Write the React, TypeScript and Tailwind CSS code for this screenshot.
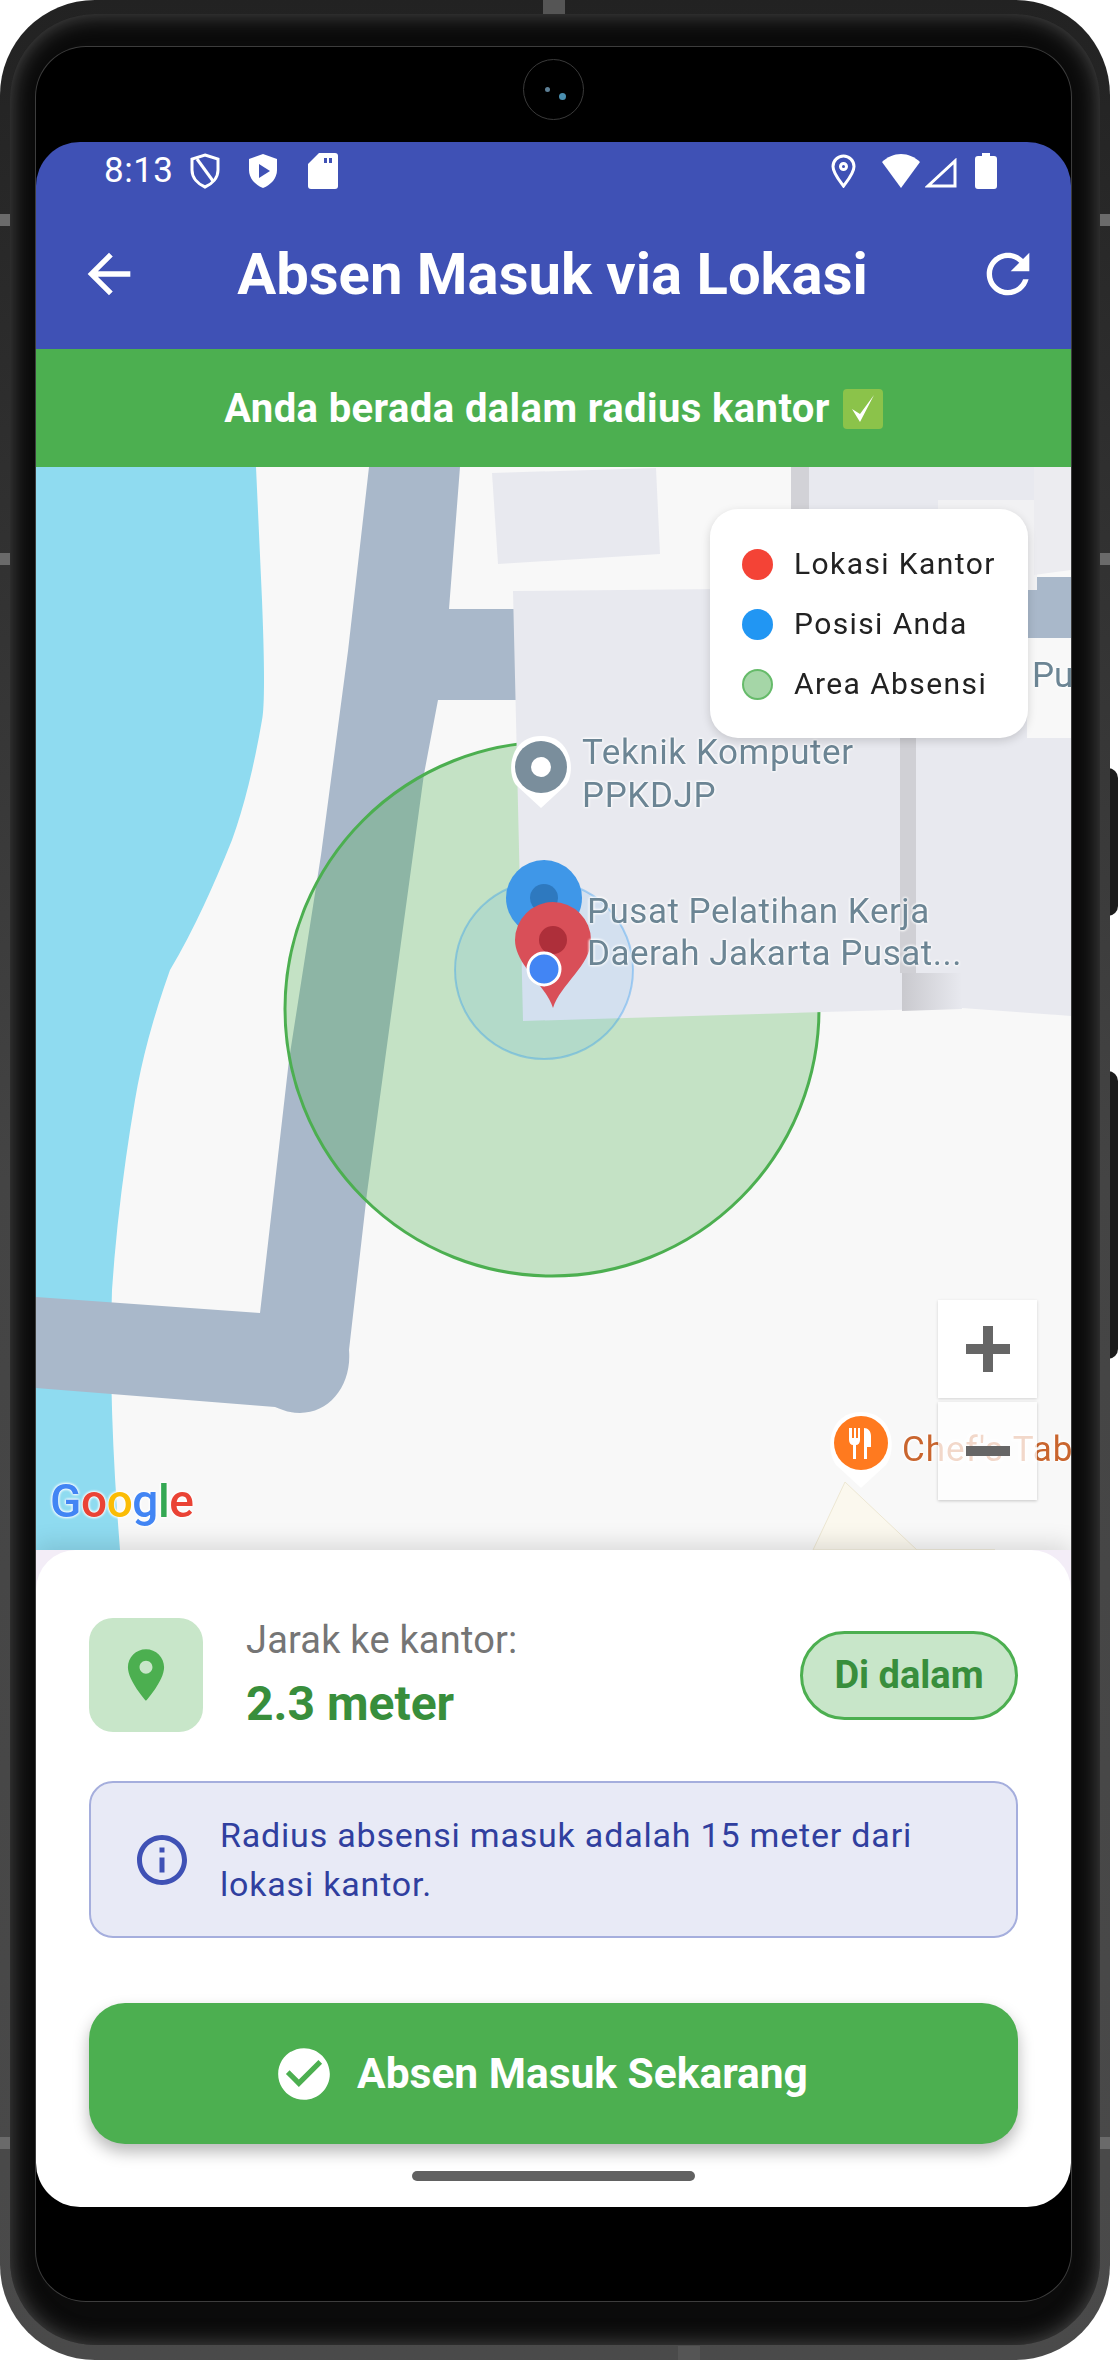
import React from 'react';

const font = { fontFamily: 'Roboto, "Noto Sans", sans-serif' };

const MapCanvas = () => (
  <svg viewBox="36 467 1035 1083" className="absolute inset-0 h-full w-full">
    <defs>
      <linearGradient id="wallShade" x1="0" x2="1" y1="0" y2="0">
        <stop offset="0" stopColor="#c9c9ce" />
        <stop offset="1" stopColor="#e8e9ef" />
      </linearGradient>
    </defs>
    <rect x="36" y="467" width="1035" height="1083" fill="#f8f8f8" />
    {/* water */}
    <path d="M36 467H256L262 600Q266 700 262 720Q250 790 232 840Q200 920 170 970Q145 1040 135 1100Q118 1200 112 1290Q108 1400 120 1550H36Z" fill="#8fdbf0" />
    {/* roads */}
    <path d="M369 467H460L449 609H520V700H438L424 774L385 1060L367 1193L349 1350C352 1385 330 1413 300 1413C290 1413 282 1410 275 1407L36 1388V1297L260 1313L289 1060L321 855L348 651Z" fill="#a9b8ca" />
    <path d="M1027 577H1071V638H1027Z" fill="#a9b8ca" />
    {/* attendance radius */}
    <circle cx="552" cy="1009" r="267" fill="#4caf50" fillOpacity="0.3" stroke="#4caf50" strokeWidth="3" />
    {/* buildings */}
    <path d="M492 473L656 468L660 554L498 564Z" fill="#e8e9ef" />
    <path d="M791 467H809V510H791Z" fill="#d2d2d7" />
    <path d="M809 467H1040V510H809Z" fill="#e8e9ef" />
    <path d="M938 500H1037V590H938Z" fill="#f1f1f3" />
    <path d="M1034 467H1071V570L1034 575Z" fill="#ececf0" />
    <path d="M513 591L1027 586V738L1071 738V1016L962 1008L523 1021Z" fill="#e8e9ef" />
    <path d="M900 738H916V973H900Z" fill="#d0d0d5" />
    <path d="M902 973H962V1009L902 1011Z" fill="url(#wallShade)" />
    {/* accuracy circle */}
    <circle cx="544" cy="970" r="89" fill="#2196f3" fillOpacity="0.1" stroke="#2196f3" strokeOpacity="0.35" strokeWidth="2" />
    {/* POI pins */}
    <path d="M541 808L516 785C506 772 510 736 541 736C572 736 576 772 566 785Z" fill="#ffffff" />
    <circle cx="541" cy="767" r="26" fill="#7a8e9c" />
    <circle cx="541" cy="767" r="10" fill="#ffffff" />
    <path d="M845 1482L813 1550H995L917 1550Z" fill="#fbf8ee" stroke="#ede7d3" strokeWidth="1" />
    <path d="M861 1488L836 1465C825 1450 828 1412 861 1412C894 1412 897 1450 886 1465Z" fill="#ffffff" />
    <circle cx="861" cy="1443" r="27" fill="#ff7a1f" />
    <path d="M849 1428V1440C849 1443 851 1445 853 1445V1459H856V1445C858 1445 860 1443 860 1440V1428H858V1438H856V1428H854V1438H852V1428ZM864 1428V1459H867V1447H871V1436C871 1431 868 1428 864 1428Z" fill="#ffffff" />
    {/* markers */}
    <circle cx="544" cy="898" r="38" fill="#3f97e8" />
    <circle cx="544" cy="898" r="14" fill="#2e79bf" />
    <path d="M553 1008C546 985 515 965 515 940A38 38 0 0 1 591 940C591 965 560 985 553 1008Z" fill="#d94f58" />
    <circle cx="553" cy="940" r="14" fill="#ae2f3a" />
    <circle cx="544" cy="969" r="16" fill="#4285f4" stroke="#ffffff" strokeWidth="3" />
  </svg>
);

const LegendRow = ({ dot, label }: { dot: string; label: string }) => (
  <div className="flex h-[40px] items-center gap-[21px]">
    <span className={`h-[31px] w-[31px] rounded-full ${dot}`} />
    <span className="text-[30px] leading-[40px] tracking-[1.4px] text-[#222222]">{label}</span>
  </div>
);

const halo = '[text-shadow:0_0_3px_#fff,0_0_3px_#fff,0_0_3px_#fff]';

const MapArea = () => (
  <div className="relative flex-1 overflow-hidden">
    <MapCanvas />
    <div className={`absolute left-[546px] top-[264px] text-[35px] leading-[43px] tracking-[0.6px] text-[#6c8594] ${halo}`}>
      Teknik Komputer
      <br />
      PPKDJP
    </div>
    <div className={`absolute left-[551px] top-[424px] whitespace-nowrap text-[35px] leading-[42px] tracking-[0.5px] text-[#6c8594] ${halo}`}>
      Pusat Pelatihan Kerja
      <br />
      Daerah Jakarta Pusat...
    </div>
    <div className={`absolute left-[996px] top-[188px] text-[35px] leading-[42px] text-[#6c8594] ${halo}`}>Pusat</div>
    <div className={`absolute left-[866px] top-[962px] whitespace-nowrap text-[35px] leading-[42px] tracking-[1px] text-[#c9652e] ${halo}`}>Chef's Table</div>

    <div className={`absolute left-[14px] top-[1006px] text-[46px] font-medium leading-[56px] tracking-[-0.4px] ${halo}`}>
      <span className="text-[#4285f4]">G</span>
      <span className="text-[#ea4335]">o</span>
      <span className="text-[#fbbc05]">o</span>
      <span className="text-[#4285f4]">g</span>
      <span className="text-[#34a853]">l</span>
      <span className="text-[#ea4335]">e</span>
    </div>

    {/* legend */}
    <div className="absolute left-[674px] top-[42px] flex w-[318px] flex-col gap-[20px] rounded-[28px] bg-white pb-[34px] pl-[32px] pt-[35px] shadow-[0_3px_10px_rgba(0,0,0,0.15)]">
      <LegendRow dot="bg-[#f44336]" label="Lokasi Kantor" />
      <LegendRow dot="bg-[#2196f3]" label="Posisi Anda" />
      <LegendRow dot="border-2 border-[#66bb6a] bg-[#a5d6a7]" label="Area Absensi" />
    </div>

    {/* zoom buttons */}
    <div className="absolute left-[902px] top-[833px] flex w-[99px] flex-col gap-[4px]">
      <div className="flex h-[98px] items-center justify-center bg-white shadow-[0_1px_3px_rgba(0,0,0,0.15)]">
        <svg width="44" height="46" viewBox="0 0 44 46"><path d="M17 0h10v18h17v10H27v18H17V28H0V18h17z" fill="#666666" /></svg>
      </div>
      <div className="flex h-[98px] items-center justify-center bg-white/75 shadow-[0_1px_3px_rgba(0,0,0,0.2)]">
        <svg width="44" height="10" viewBox="0 0 44 10"><path d="M0 0h44v10H0z" fill="#666666" /></svg>
      </div>
    </div>
  </div>
);

const StatusBar = () => (
  <div className="flex h-[56px] items-center justify-between pl-[68px] pr-[74px] pt-[1px] text-white">
    <div className="flex items-center">
      <span className="w-[86px] text-[35px] leading-[40px] tracking-[0.5px]">8:13</span>
      <svg width="30" height="36" viewBox="0 0 30 36" fill="none" stroke="#ffffff" strokeWidth="3">
        <path d="M15 2L28 6V17C28 25 22 31 15 34C8 31 2 25 2 17V6Z" />
        <path d="M7 6L23 28" />
      </svg>
      <svg width="30" height="36" viewBox="0 0 30 36" className="ml-[28px]">
        <path d="M15 1L29 6V17C29 25 23 32 15 35C7 32 1 25 1 17V6Z" fill="#ffffff" />
        <path d="M11 11L22 18L11 25Z" fill="#3f51b5" />
      </svg>
      <svg width="30" height="36" viewBox="0 0 30 36" className="ml-[30px]">
        <path d="M11 0H27C29 0 30 1 30 3V33C30 35 29 36 27 36H3C1 36 0 35 0 33V11Z" fill="#ffffff" />
        <path d="M16 5h3v5h-3zM21 5h3v5h-3z" fill="#3f51b5" />
      </svg>
    </div>
    <div className="flex items-center">
      <svg width="25" height="34" viewBox="0 0 25 34" fill="none" stroke="#ffffff" strokeWidth="3">
        <path d="M12.5 32C8 26 2 19 2 12.5A10.5 10.5 0 0 1 23 12.5C23 19 17 26 12.5 32Z" />
        <circle cx="12.5" cy="12.5" r="3" />
      </svg>
      <svg width="38" height="34" viewBox="0 0 38 34" className="ml-[26px]">
        <path d="M19 34L0 8C5 3 12 0 19 0S33 3 38 8Z" fill="#ffffff" />
      </svg>
      <svg width="32" height="30" viewBox="0 0 32 30" fill="none" stroke="#ffffff" strokeWidth="3" className="ml-[5px] mt-[4px]">
        <path d="M30 3V28H3Z" />
      </svg>
      <svg width="22" height="36" viewBox="0 0 22 36" className="ml-[18px]">
        <path d="M7 0h8v3h4c2 0 3 1 3 3v27c0 2-1 3-3 3H3c-2 0-3-1-3-3V6c0-2 1-3 3-3h4z" fill="#ffffff" />
      </svg>
    </div>
  </div>
);

const AppHeader = () => (
  <div className="flex h-[207px] flex-col bg-[#3f51b5] text-white">
    <StatusBar />
    <div className="flex flex-1 items-center pl-[41px] pr-[31px]">
      <svg width="64" height="64" viewBox="0 0 24 24" fill="#ffffff">
        <path d="M20 11H7.83l5.59-5.59L12 4l-8 8 8 8 1.41-1.41L7.83 13H20v-2z" />
      </svg>
      <h1 className="flex-1 pr-[12px] text-center text-[58px] font-bold leading-[70px]">Absen Masuk via Lokasi</h1>
      <svg width="64" height="64" viewBox="0 0 24 24" fill="#ffffff">
        <path d="M17.65 6.35C16.2 4.9 14.21 4 12 4c-4.42 0-7.99 3.58-7.99 8s3.57 8 7.99 8c3.73 0 6.84-2.55 7.73-6h-2.08c-.82 2.33-3.04 4-5.65 4-3.31 0-6-2.69-6-6s2.69-6 6-6c1.66 0 3.14.69 4.22 1.78L13 11h7V4l-2.35 2.35z" />
      </svg>
    </div>
  </div>
);

const StatusBanner = () => (
  <div className="flex h-[118px] items-center justify-center bg-[#4caf50] pt-[2px] text-white">
    <span className="text-[40px] font-bold leading-[48px] tracking-[0.4px]">Anda berada dalam radius kantor</span>
    <svg width="40" height="40" viewBox="0 0 40 40" className="ml-[13px]">
      <rect width="40" height="40" rx="4" fill="#8bc34a" />
      <path d="M9 20L17 33L31 6L17 25Z" fill="#ffffff" />
    </svg>
  </div>
);

const BottomSheet = () => (
  <div className="relative bg-[#f3edf7] shadow-[0_-6px_22px_rgba(0,0,0,0.12)]">
    <div className="flex flex-col rounded-t-[40px] bg-white px-[53px] pt-[68px]">
      <div className="flex h-[114px] items-center">
        <div className="flex h-[114px] w-[114px] items-center justify-center rounded-[24px] bg-[#c8e6c9]">
          <svg width="62" height="62" viewBox="0 0 24 24" fill="#4caf50">
            <path d="M12 2C8.13 2 5 5.13 5 9c0 5.25 7 13 7 13s7-7.75 7-13c0-3.87-3.13-7-7-7zm0 9.5c-1.38 0-2.5-1.12-2.5-2.5s1.12-2.5 2.5-2.5 2.5 1.12 2.5 2.5-1.12 2.5-2.5 2.5z" />
          </svg>
        </div>
        <div className="ml-[43px] flex flex-1 flex-col self-start">
          <span className="text-[38px] leading-[44px] tracking-[0.2px] text-[#757575]">Jarak ke kantor:</span>
          <span className="mt-[12px] text-[48px] font-bold leading-[60px] text-[#388e3c]">2.3 meter</span>
        </div>
        <div className="flex h-[89px] w-[218px] items-center justify-center rounded-full border-[3px] border-[#4caf50] bg-[#c8e6c9] text-[38px] font-bold text-[#388e3c]">
          Di dalam
        </div>
      </div>

      <div className="mt-[49px] flex h-[157px] items-center rounded-[24px] border-2 border-[#a5aedd] bg-[#e8eaf6] pl-[41px]">
        <svg width="60" height="60" viewBox="0 0 24 24" fill="#3f51b5" className="shrink-0">
          <path d="M11 7h2v2h-2zm0 4h2v6h-2zm1-9C6.48 2 2 6.48 2 12s4.48 10 10 10 10-4.48 10-10S17.52 2 12 2zm0 18c-4.41 0-8-3.59-8-8s3.59-8 8-8 8 3.59 8 8-3.59 8-8 8z" />
        </svg>
        <p className="ml-[28px] w-[740px] text-[34px] leading-[49px] tracking-[0.8px] text-[#303f9f]">
          Radius absensi masuk adalah 15 meter dari lokasi kantor.
        </p>
      </div>

      <button className="mt-[65px] flex h-[141px] items-center justify-center gap-[22px] rounded-[36px] bg-[#4caf50] pr-[26px] text-white shadow-[0_8px_16px_rgba(0,0,0,0.28)]">
        <svg width="62" height="62" viewBox="0 0 24 24" fill="#ffffff">
          <path d="M12 2C6.48 2 2 6.48 2 12s4.48 10 10 10 10-4.48 10-10S17.52 2 12 2zm-2 15l-5-5 1.41-1.41L10 14.17l7.59-7.59L19 8l-9 9z" />
        </svg>
        <span className="text-[42.5px] font-bold leading-[52px]">Absen Masuk Sekarang</span>
      </button>

      <div className="mx-auto mb-[26px] mt-[27px] h-[10px] w-[283px] rounded-full bg-[#616161]" />
    </div>
  </div>
);

const Camera = () => (
  <div className="relative h-[61px] w-[61px] rounded-full border border-[#3a3a3a] bg-black">
    <span className="absolute left-[21px] top-[27px] h-[5px] w-[5px] rounded-full bg-[#5d7f95]" />
    <span className="absolute left-[35px] top-[33px] h-[7px] w-[7px] rounded-full bg-[#4a8fb0]" />
  </div>
);

export default function App() {
  return (
    <div className="relative h-[2361px] w-[1118px] overflow-hidden bg-white" style={font}>
      {/* side buttons */}
      <div className="absolute left-[1100px] top-[768px] h-[148px] w-[18px] rounded-r-[10px] bg-[#1c1c1c]" />
      <div className="absolute left-[1100px] top-[1071px] h-[288px] w-[18px] rounded-r-[10px] bg-[#1c1c1c]" />

      {/* phone body */}
      <div className="relative h-[2360px] w-[1110px] rounded-[95px] bg-gradient-to-b from-[#222222] via-[#444444] to-[#4a4a4a] px-[10px] pb-[15px] pt-[14px]">
        <div className="absolute left-[543px] top-0 h-[14px] w-[22px] bg-[#555555]" />
        <div className="absolute left-[678px] bottom-0 h-[14px] w-[22px] bg-[#555555]" />
        {/* antenna ticks */}
        <div className="absolute left-0 top-[214px] h-[12px] w-[10px] bg-[#6a6a6a]" />
        <div className="absolute right-0 top-[214px] h-[12px] w-[10px] bg-[#6a6a6a]" />
        <div className="absolute left-0 top-[553px] h-[12px] w-[10px] bg-[#6a6a6a]" />
        <div className="absolute right-0 top-[553px] h-[12px] w-[10px] bg-[#6a6a6a]" />
        <div className="absolute left-0 top-[2137px] h-[12px] w-[10px] bg-[#6a6a6a]" />
        <div className="absolute right-0 top-[2137px] h-[12px] w-[10px] bg-[#6a6a6a]" />
        <div className="h-full rounded-[85px] bg-[#0b0b0b] pb-[45px] pl-[26px] pr-[29px] pt-[33px] shadow-[inset_0_0_22px_rgba(140,140,140,0.55)]">
          <div className="flex h-[2254px] flex-col rounded-[50px] bg-black ring-1 ring-[#3d3d3d]">
            <div className="flex h-[95px] shrink-0 justify-center pt-[12px]">
              <Camera />
            </div>
            <div className="flex h-[2065px] shrink-0 flex-col overflow-hidden rounded-[44px] blur-[0.6px]">
              <AppHeader />
              <StatusBanner />
              <MapArea />
              <BottomSheet />
            </div>
          </div>
        </div>
      </div>
    </div>
  );
}
